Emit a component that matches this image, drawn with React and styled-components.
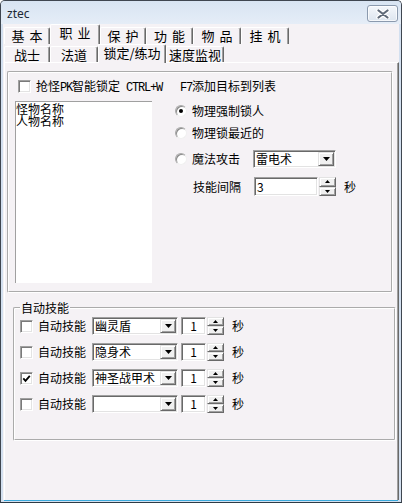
import React from "react"
import styled, {createGlobalStyle} from "styled-components"

const GlobalStyle = createGlobalStyle`
  html, body { margin: 0; padding: 0; background: #fff; }
  body {
    font-family: "Noto Sans CJK SC", "Noto Sans", sans-serif;
    font-size: 12px;
    color: #000;
  }
`

const FACE = "#f5f2f5"

const Window = styled.div`
  box-sizing: border-box;
  width: 402px;
  height: 503px;
  border: 1px solid #3f4650;
  border-bottom-color: #2d3a44;
  border-radius: 5px 5px 0 0;
  background: #d3e0f0;
  display: flex;
  flex-direction: column;
  overflow: hidden;
`

const TitleBar = styled.div`
  flex: none;
  height: 23px;
  display: flex;
  align-items: flex-start;
  justify-content: space-between;
  padding: 0 3px 0 6px;
  background: linear-gradient(#d8e4f2, #e5edf7);
`

const TitleText = styled.span`
  font-family: "Noto Sans", sans-serif;
  font-size: 12px;
  line-height: 26px;
  color: #1c2836;
`

const CloseButton = styled.div`
  box-sizing: border-box;
  width: 31px;
  height: 17px;
  margin-top: 4px;
  border: 1px solid #8b9aae;
  border-radius: 3px;
  background: linear-gradient(#f4f7fb, #dde5ef);
  box-shadow: inset 0 0 0 1px rgba(255, 255, 255, 0.7);
  display: flex;
  align-items: center;
  justify-content: center;
`

const Client = styled.div`
  flex: 1;
  min-height: 0;
  margin: 0 2px 2px;
  padding-left: 1px;
  background: ${FACE};
  display: flex;
  flex-direction: column;
  box-shadow: 0 2px 0 -1px #3aa9dc;
`

const TabRow = styled.div`
  flex: none;
  height: ${p => p.$h}px;
  display: flex;
  align-items: flex-end;
`

const Tab = styled.div`
  box-sizing: border-box;
  flex: none;
  width: ${p => p.$w}px;
  height: ${p => p.$h}px;
  margin-bottom: ${p => p.$front && p.$active ? -1 : 0}px;
  padding-bottom: ${p => p.$lift}px;
  padding-left: ${p => p.$big ? 5 : 0}px;
  display: flex;
  align-items: center;
  justify-content: center;
  border-top: 1px solid #fff;
  border-left: 1px solid #fff;
  border-right: 1px solid #696969;
  box-shadow: inset -1px 0 0 #a0a0a0;
  border-radius: 2px 2px 0 0;
  background: ${FACE};
  position: relative;
  z-index: ${p => p.$active ? 1 : 0};
  font-size: 13px;
  letter-spacing: ${p => p.$big ? 5 : 0}px;
  line-height: 14px;
  white-space: nowrap;
`

const Panel = styled.div`
  flex: 1;
  border-top: 1px solid #fff;
  border-left: 1px solid #fff;
  border-right: 1px solid #696969;
  box-shadow: inset -1px 0 0 #a0a0a0;
  padding: 8px 0 0 2px;
`

const GroupBox = styled.div`
  box-sizing: border-box;
  width: 386px;
  height: 222px;
  border: 2px groove #fff;
  border-radius: 2px;
  padding: 7px 0 0 6px;
`

const FieldSet = styled.fieldset`
  box-sizing: border-box;
  width: 383px;
  min-width: 0;
  margin: 8px 0 0 6px;
  padding: 0 5px 24px;
  border: 2px groove #fff;
  border-radius: 2px;
  display: flex;
  flex-direction: column;
  gap: 4px;
`

const Legend = styled.legend`
  padding: 0 1px;
  font-size: 12px;
  line-height: 14px;
`

const Row = styled.div`
  display: flex;
  align-items: center;
  height: ${p => p.$h || 22}px;
  margin-top: ${p => p.$mt || 0}px;
  padding-left: ${p => p.$indent || 0}px;
`

const Label = styled.span`
  line-height: 14px;
  white-space: nowrap;
  margin-left: ${p => p.$ml || 0}px;
  margin-right: ${p => p.$mr || 0}px;
`

const Mono = styled.span`
  font-family: "Liberation Mono", monospace;
  font-size: 12px;
  letter-spacing: -1.2px;
  white-space: pre;
`

const Check = styled.span`
  box-sizing: border-box;
  flex: none;
  width: 13px;
  height: 13px;
  background: #fff;
  border: 1px solid;
  border-color: #a0a0a0 #fff #fff #a0a0a0;
  box-shadow: inset 1px 1px 0 #7a7a7a, inset -1px -1px 0 #e3e3e3;
  display: flex;
  align-items: center;
  justify-content: center;
`

const Radio = styled.span`
  box-sizing: border-box;
  flex: none;
  width: 12px;
  height: 12px;
  border-radius: 50%;
  background: #fff;
  border: 1px solid;
  border-color: #a8a8a8 #f0f0f0 #f0f0f0 #a8a8a8;
  box-shadow: inset 1px 1px 0 #8a8a8a;
  display: flex;
  align-items: center;
  justify-content: center;

  &::after {
    content: "";
    display: ${p => p.$on ? "block" : "none"};
    width: 4px;
    height: 4px;
    border-radius: 50%;
    background: #000;
  }
`

const Body = styled.div`
  display: grid;
  grid-template-columns: 137px auto;
  column-gap: 23px;
  margin-top: 8px;
`

const ListBox = styled.div`
  box-sizing: border-box;
  height: 182px;
  background: #fff;
  border-top: 1px solid #a0a0a0;
  border-left: 1px solid #a0a0a0;
  padding-top: 1px;
  line-height: 12px;
`

const Column = styled.div`
  display: flex;
  flex-direction: column;
`

const Sunken = styled.div`
  box-sizing: border-box;
  display: flex;
  width: ${p => p.$w}px;
  height: ${p => p.$h}px;
  background: #fff;
  border: 1px solid;
  border-color: #a0a0a0 #fff #fff #a0a0a0;
  box-shadow: inset 1px 1px 0 #696969, inset -1px -1px 0 #e3e3e3;
  padding: 1px;
  flex: none;
`

const FieldText = styled.div`
  flex: 1;
  line-height: ${p => p.$h}px;
  text-align: ${p => p.$center ? "center" : "left"};
  padding-left: ${p => p.$center ? 0 : 1}px;
  white-space: nowrap;
`

const Raised = styled.div`
  box-sizing: border-box;
  background: #f0f0f0;
  border: 1px solid;
  border-color: #e3e3e3 #696969 #696969 #e3e3e3;
  box-shadow: inset 1px 1px 0 #fff, inset -1px -1px 0 #a0a0a0;
  display: flex;
  align-items: center;
  justify-content: center;
`

const DropButton = styled(Raised)`
  width: 16px;
  flex: none;
`

const SpinWrap = styled.div`
  display: flex;
  flex: none;
`

const SpinButtons = styled.div`
  display: flex;
  flex-direction: column;
  width: 17px;
  height: ${p => p.$h}px;
  margin-left: 1px;
`

const SpinButton = styled(Raised)`
  flex: 1;
`

const Combo = ({w, h = 18, text}) =>
  <Sunken $w={w} $h={h}>
    <FieldText $h={h - 4}>{text}</FieldText>
    <DropButton>
      <svg width="7" height="4" viewBox="0 0 7 4"><polygon points="0,0 7,0 3.5,4" fill="#000"/></svg>
    </DropButton>
  </Sunken>

const Spin = ({w, h, value, center}) =>
  <SpinWrap>
    <Sunken $w={w} $h={h}>
      <FieldText $h={h - 4} $center={center}>{value}</FieldText>
    </Sunken>
    <SpinButtons $h={h}>
      <SpinButton>
        <svg width="5" height="3" viewBox="0 0 5 3"><polygon points="0,3 2.5,0 5,3" fill="#000"/></svg>
      </SpinButton>
      <SpinButton>
        <svg width="5" height="3" viewBox="0 0 5 3"><polygon points="0,0 5,0 2.5,3" fill="#000"/></svg>
      </SpinButton>
    </SpinButtons>
  </SpinWrap>

const CheckBox = ({checked}) =>
  <Check>
    {checked && <svg width="9" height="9" viewBox="0 0 9 9">
      <path d="M1.3 4.3 L3.5 6.8 L7.8 1.8" stroke="#000" strokeWidth="1.8" fill="none"/>
    </svg>}
  </Check>

const outerTabs = [["基本", 46], ["职业", 50, true], ["保护", 46], ["功能", 47], ["物品", 48], ["挂机", 48]]
const innerTabs = [["战士", 46], ["法道", 48], ["锁定/练功", 68, true], ["速度监视", 58]]
const skills = [["幽灵盾", false], ["隐身术", false], ["神圣战甲术", true], ["", false]]

export default function App() {
  return <>
    <GlobalStyle/>
    <Window>
      <TitleBar>
        <TitleText>ztec</TitleText>
        <CloseButton>
          <svg width="14" height="10" viewBox="0 0 14 10">
            <path d="M2.5 1.5 L11.5 8.5 M11.5 1.5 L2.5 8.5" stroke="#fff" strokeWidth="4.4" strokeLinecap="round"/>
            <path d="M2.5 1.5 L11.5 8.5 M11.5 1.5 L2.5 8.5" stroke="#5f6a79" strokeWidth="2.2" strokeLinecap="round"/>
          </svg>
        </CloseButton>
      </TitleBar>
      <Client>
        <TabRow $h={20}>
          {outerTabs.map(([t, w, a]) =>
            <Tab key={t} $w={w} $h={a ? 20 : 17} $lift={a ? 3 : 0} $active={a} $big>{t}</Tab>)}
        </TabRow>
        <TabRow $h={18}>
          {innerTabs.map(([t, w, a]) =>
            <Tab key={t} $w={w} $h={a ? 19 : 16} $lift={a ? 2 : 0} $active={a} $front>{t}</Tab>)}
        </TabRow>
        <Panel>
          <GroupBox>
            <Row $h={13} $indent={3}>
              <CheckBox/>
              <Label $ml={5}>抢怪<Mono>PK</Mono>智能锁定<Mono> CTRL+W   F7</Mono>添加目标到列表</Label>
            </Row>
            <Body>
              <ListBox>
                <div>怪物名称</div>
                <div>人物名称</div>
              </ListBox>
              <Column>
                <Row $h={20}>
                  <Radio $on/>
                  <Label $ml={5}>物理强制锁人</Label>
                </Row>
                <Row $h={20} $mt={2}>
                  <Radio/>
                  <Label $ml={5}>物理锁最近的</Label>
                </Row>
                <Row $h={18} $mt={7}>
                  <Radio/>
                  <Label $ml={5} $mr={13}>魔法攻击</Label>
                  <Combo w={83} h={18} text="雷电术"/>
                </Row>
                <Row $h={19} $mt={9} $indent={18}>
                  <Label $mr={13}>技能间隔</Label>
                  <Spin w={64} h={19} value="3"/>
                  <Label $ml={8}>秒</Label>
                </Row>
              </Column>
            </Body>
          </GroupBox>
          <FieldSet>
            <Legend>自动技能</Legend>
            {skills.map(([name, on], i) =>
              <Row key={i}>
                <CheckBox checked={on}/>
                <Label $ml={5} $mr={6}>自动技能</Label>
                <Combo w={86} h={18} text={name}/>
                <Label $ml={3}/>
                <Spin w={25} h={18} value="1" center/>
                <Label $ml={8}>秒</Label>
              </Row>)}
          </FieldSet>
        </Panel>
      </Client>
    </Window>
  </>
}
